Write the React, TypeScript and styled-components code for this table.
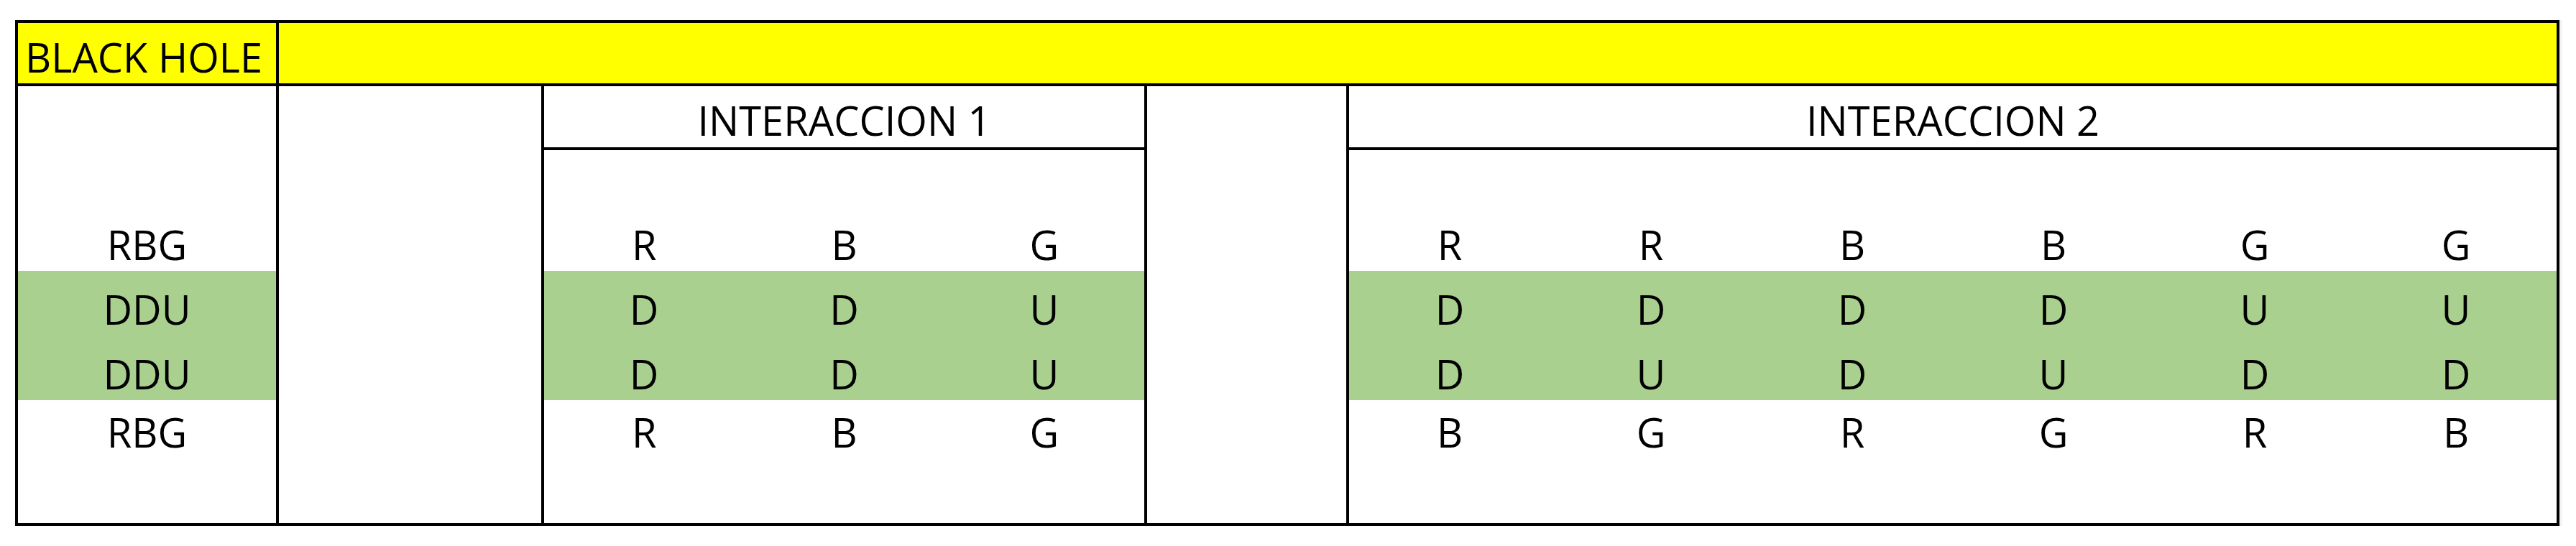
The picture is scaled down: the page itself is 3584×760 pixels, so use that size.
import React from 'react';
import styled, { createGlobalStyle } from 'styled-components';

const GlobalStyle = createGlobalStyle`
  html, body {
    margin: 0;
    padding: 0;
    background: #ffffff;
  }
  body {
    font-family: 'Open Sans', 'Liberation Sans', sans-serif;
    color: #000;
  }
`;

const YELLOW = '#ffff00';
const GREEN = '#a9d08e';
const LINE = '#000';

// heights of the six data rows under the group headers
const ROWS = [81, 87, 90, 90, 81, 90];
const GREEN_ROWS = [2, 3];

const LABELS = ['', 'RBG', 'DDU', 'DDU', 'RBG', ''];

const GROUP_1 = [
  [],
  ['R', 'B', 'G'],
  ['D', 'D', 'U'],
  ['D', 'D', 'U'],
  ['R', 'B', 'G'],
  [],
];

const GROUP_2 = [
  [],
  ['R', 'R', 'B', 'B', 'G', 'G'],
  ['D', 'D', 'D', 'D', 'U', 'U'],
  ['D', 'U', 'D', 'U', 'D', 'D'],
  ['B', 'G', 'R', 'G', 'R', 'B'],
  [],
];

interface GroupProps {
  title: string;
  cols: number;
  rows: string[][];
  width?: number;
  last?: boolean;
}

const Group: React.FC<GroupProps> = ({ title, cols, rows, width, last }) => (
  <GroupColumn $width={width} $last={last}>
    <GroupHeader>{title}</GroupHeader>
    {rows.map((cells, i) => (
      <DataRow key={i} $h={ROWS[i]} $green={GREEN_ROWS.includes(i)} $cols={cols}>
        {Array.from({ length: cols }).map((_, j) => (
          <Cell key={j}>{cells[j] || ''}</Cell>
        ))}
      </DataRow>
    ))}
  </GroupColumn>
);

const App: React.FC = () => {
  return (
    <>
      <GlobalStyle />
      <Page>
        <Sheet>
          <TitleRow>
            <TitleCell>BLACK HOLE</TitleCell>
            <TitleFill />
          </TitleRow>

          <Body>
            <LabelColumn>
              <HeaderSpacer />
              {LABELS.map((label, i) => (
                <DataRow key={i} $h={ROWS[i]} $green={GREEN_ROWS.includes(i)} $cols={1}>
                  <Cell>{label}</Cell>
                </DataRow>
              ))}
            </LabelColumn>

            <BlankColumn $width={365} />

            <Group title="INTERACCION 1" cols={3} rows={GROUP_1} width={835} />

            <BlankColumn $width={277} />

            <Group title="INTERACCION 2" cols={6} rows={GROUP_2} last />
          </Body>
        </Sheet>
      </Page>
    </>
  );
};

export default App;

// Styles
const Page = styled.div`
  padding: 28px 0 0 21px;
`;

const Sheet = styled.div`
  width: 3540px;
  box-sizing: border-box;
  border: 4px solid ${LINE};
  box-shadow: 4px 0 0 #f3f3f3;
  display: flex;
  flex-direction: column;
`;

const TitleRow = styled.div`
  display: flex;
  height: 88px;
  box-sizing: border-box;
  background: ${YELLOW};
  border-bottom: 4px solid ${LINE};
`;

const TitleCell = styled.div`
  width: 363px;
  box-sizing: border-box;
  border-right: 4px solid ${LINE};
  display: flex;
  align-items: flex-end;
  padding: 0 0 9px 10px;
  font-size: 56px;
  line-height: 56px;
  white-space: nowrap;
`;

const TitleFill = styled.div`
  flex: 1;
`;

const Body = styled.div`
  display: flex;
  height: 608px;
`;

const LabelColumn = styled.div`
  width: 363px;
  box-sizing: border-box;
  border-right: 4px solid ${LINE};
  display: flex;
  flex-direction: column;
`;

const HeaderSpacer = styled.div`
  height: 89px;
`;

const BlankColumn = styled.div<{ $width: number }>`
  width: ${(p) => p.$width + 4}px;
  box-sizing: border-box;
  border-right: 4px solid ${LINE};
`;

const GroupColumn = styled.div<{ $width?: number; $last?: boolean }>`
  ${(p) => (p.$width ? `width: ${p.$width + 4}px;` : 'flex: 1;')}
  box-sizing: border-box;
  border-right: ${(p) => (p.$last ? 'none' : `4px solid ${LINE}`)};
  display: flex;
  flex-direction: column;
`;

const GroupHeader = styled.div`
  height: 89px;
  box-sizing: border-box;
  border-bottom: 4px solid ${LINE};
  display: flex;
  align-items: flex-end;
  justify-content: center;
  padding-bottom: 10px;
  font-size: 56px;
  line-height: 56px;
  white-space: nowrap;
`;

const DataRow = styled.div<{ $h: number; $green?: boolean; $cols: number }>`
  height: ${(p) => p.$h}px;
  display: grid;
  grid-template-columns: repeat(${(p) => p.$cols}, 1fr);
  background: ${(p) => (p.$green ? GREEN : 'transparent')};
`;

const Cell = styled.div`
  display: flex;
  align-items: flex-end;
  justify-content: center;
  padding-bottom: 9px;
  font-size: 56px;
  line-height: 56px;
  white-space: nowrap;
`;
